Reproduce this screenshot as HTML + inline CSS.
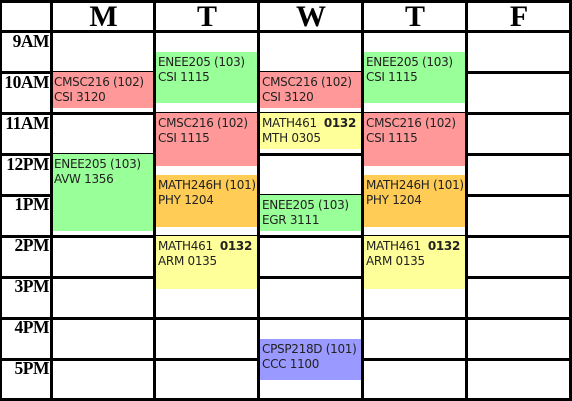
<!DOCTYPE html><html><head><style>
body{margin:0;width:572px;height:401px;background:#fff;position:relative;overflow:hidden}
.h{position:absolute;left:0;width:572px;height:3px;background:#000}
.v{position:absolute;top:0;height:401px;width:3px;background:#000}
.d{position:absolute;top:0;height:31px;font:bold 30px "Liberation Serif",serif;text-align:center;line-height:34px}
.t{position:absolute;left:0;width:49px;text-align:right;font:bold 17.5px "Liberation Serif",serif;letter-spacing:-0.5px;line-height:20px}
.e{position:absolute;font:12px "DejaVu Sans",Verdana,sans-serif;color:#222;padding:3px 0 0 2px;box-sizing:border-box;line-height:15px;letter-spacing:-0.3px;white-space:nowrap;overflow:hidden}
.r{background:#ff9999}.g{background:#99ff99}.o{background:#ffcc55}.y{background:#ffff99}.b{background:#9999ff}
</style></head><body>
<div class="d" style="left:53px;width:101px">M</div>
<div class="d" style="left:156px;width:102px">T</div>
<div class="d" style="left:260px;width:102px">W</div>
<div class="d" style="left:364px;width:102px">T</div>
<div class="d" style="left:468px;width:102px">F</div>
<div class="t" style="top:31px">9AM</div>
<div class="t" style="top:72px">10AM</div>
<div class="t" style="top:113px">11AM</div>
<div class="t" style="top:154px">12PM</div>
<div class="t" style="top:194px">1PM</div>
<div class="t" style="top:235px">2PM</div>
<div class="t" style="top:276px">3PM</div>
<div class="t" style="top:317px">4PM</div>
<div class="t" style="top:358px">5PM</div>
<div class="h" style="top:0"></div><div class="h" style="top:30px"></div><div class="h" style="top:71px"></div><div class="h" style="top:112px"></div><div class="h" style="top:153px"></div><div class="h" style="top:194px"></div><div class="h" style="top:235px"></div><div class="h" style="top:276px"></div><div class="h" style="top:317px"></div><div class="h" style="top:358px"></div><div class="h" style="top:398px"></div>
<div class="e r" style="left:52px;width:102px;top:72px;height:36px">CMSC216 (102)<br>CSI 3120</div>
<div class="e g" style="left:52px;width:102px;top:154px;height:77px">ENEE205 (103)<br>AVW 1356</div>
<div class="e g" style="left:156px;width:102px;top:52px;height:51px">ENEE205 (103)<br>CSI 1115</div>
<div class="e r" style="left:156px;width:102px;top:113px;height:53px">CMSC216 (102)<br>CSI 1115</div>
<div class="e o" style="left:156px;width:102px;top:175px;height:52px">MATH246H (101)<br>PHY 1204</div>
<div class="e y" style="left:156px;width:102px;top:236px;height:53px">MATH461 &nbsp;<b>0132</b><br>ARM 0135</div>
<div class="e r" style="left:260px;width:102px;top:72px;height:36px">CMSC216 (102)<br>CSI 3120</div>
<div class="e y" style="left:260px;width:102px;top:113px;height:36px">MATH461 &nbsp;<b>0132</b><br>MTH 0305</div>
<div class="e g" style="left:260px;width:102px;top:195px;height:36px">ENEE205 (103)<br>EGR 3111</div>
<div class="e b" style="left:260px;width:102px;top:339px;height:41px">CPSP218D (101)<br>CCC 1100</div>
<div class="e g" style="left:364px;width:102px;top:52px;height:51px">ENEE205 (103)<br>CSI 1115</div>
<div class="e r" style="left:364px;width:102px;top:113px;height:53px">CMSC216 (102)<br>CSI 1115</div>
<div class="e o" style="left:364px;width:102px;top:175px;height:52px">MATH246H (101)<br>PHY 1204</div>
<div class="e y" style="left:364px;width:102px;top:236px;height:53px">MATH461 &nbsp;<b>0132</b><br>ARM 0135</div>
<div class="v" style="left:0;width:2px"></div><div class="v" style="left:50px"></div><div class="v" style="left:153px"></div><div class="v" style="left:257px"></div><div class="v" style="left:361px"></div><div class="v" style="left:465px"></div><div class="v" style="left:569px"></div>
</body></html>
